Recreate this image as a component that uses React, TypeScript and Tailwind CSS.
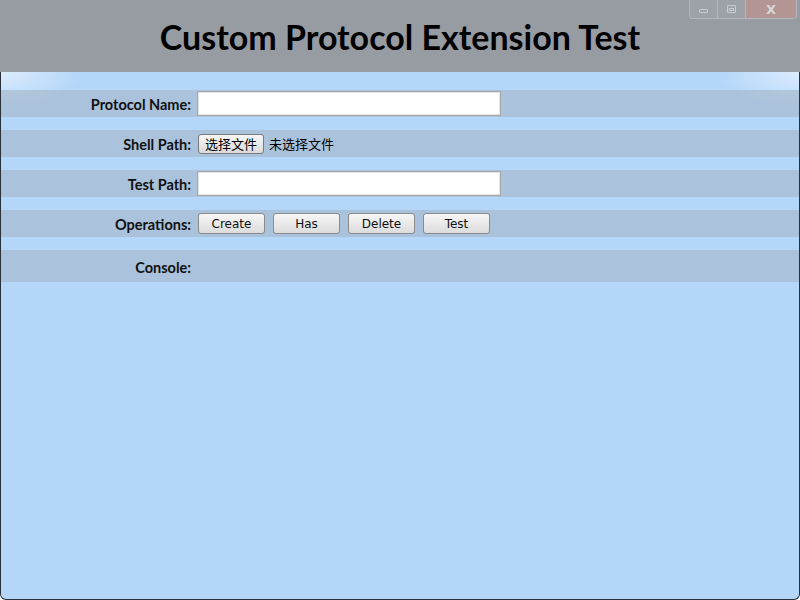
import React from "react";

const labelCls =
  "text-right text-[14.5px] font-bold text-[#111] leading-none [font-family:Lato,'Noto_Sans',sans-serif] pr-[6px] pt-[4px]";

function Btn({ children }: { children: React.ReactNode }) {
  return (
    <button className="w-[67px] h-[21px] rounded-[3px] border border-[#8a8a8a] bg-[linear-gradient(#f6f6f6,#dcdcdc)] text-[12px] text-[#111] leading-none [font-family:'DejaVu_Sans',sans-serif]">
      {children}
    </button>
  );
}

export default function App() {
  return (
    <div className="w-[800px] h-[600px] bg-white flex flex-col overflow-hidden">
      <div className="relative h-[72px] bg-[#979ca3] flex items-center justify-center shrink-0">
        <h1 className="text-[34px] font-bold text-black leading-none mt-[1px] [font-family:Lato,'Noto_Sans',sans-serif]">
          Custom Protocol Extension Test
        </h1>
        <div className="absolute top-0 right-[3px] flex h-[19px] rounded-b-[4px] border border-t-0 border-[#b4b8be] overflow-hidden">
          <div className="w-[28px] bg-[#9da2a9] border-r border-[#b4b8be] flex items-center justify-center">
            <div className="w-[9px] h-[4px] rounded-[1px] border border-[#c8cbd0] mt-[4px]" />
          </div>
          <div className="w-[28px] bg-[#9da2a9] border-r border-[#b4b8be] flex items-center justify-center">
            <div className="w-[9px] h-[8px] rounded-[1px] border border-[#c8cbd0] flex items-center justify-center">
              <div className="w-[5px] h-[3px] border border-[#c8cbd0]" />
            </div>
          </div>
          <div className="w-[50px] bg-[#b39593] flex items-center justify-center">
            <span className="text-[13px] font-bold text-[#d8d8d8] leading-none [font-family:'DejaVu_Sans',sans-serif]">X</span>
          </div>
        </div>
      </div>
      <div className="flex-1 border-x border-b border-[#2a3038] rounded-b-[6px] bg-[#b4d7f9] bg-[radial-gradient(ellipse_80px_36px_at_0_0,#dcecfe,transparent),radial-gradient(ellipse_80px_36px_at_100%_0,#dcecfe,transparent)] pt-[18px] flex flex-col gap-[13px]">
        <div className="h-[27px] bg-[rgba(163,180,198,0.6)] grid grid-cols-[196px_1fr] items-center">
          <div className={labelCls}>Protocol Name:</div>
          <input className="w-[304px] h-[25px] bg-white border border-[#a8a8a8] shadow-[inset_0_0_0_1px_#e2e2e2] outline-none" />
        </div>
        <div className="h-[27px] bg-[rgba(163,180,198,0.6)] grid grid-cols-[196px_1fr] items-center">
          <div className={labelCls}>Shell Path:</div>
          <div className="flex items-center gap-[5px] pl-[1px] [font-family:'Noto_Sans_CJK_SC',sans-serif] text-[13px] text-black">
            <button className="w-[66px] h-[20px] rounded-[3px] border border-[#7a7a7a] bg-[linear-gradient(#f7f7f7,#dadada)] text-[13px] leading-none">
              选择文件
            </button>
            <span className="leading-none">未选择文件</span>
          </div>
        </div>
        <div className="h-[27px] bg-[rgba(163,180,198,0.6)] grid grid-cols-[196px_1fr] items-center">
          <div className={labelCls}>Test Path:</div>
          <input className="w-[304px] h-[25px] bg-white border border-[#a8a8a8] shadow-[inset_0_0_0_1px_#e2e2e2] outline-none" />
        </div>
        <div className="h-[27px] bg-[rgba(163,180,198,0.6)] grid grid-cols-[196px_1fr] items-center">
          <div className={labelCls}>Operations:</div>
          <div className="flex gap-[8px] pl-[1px]">
            <Btn>Create</Btn>
            <Btn>Has</Btn>
            <Btn>Delete</Btn>
            <Btn>Test</Btn>
          </div>
        </div>
        <div className="h-[32px] bg-[rgba(163,180,198,0.6)] grid grid-cols-[196px_1fr] items-center">
          <div className={labelCls}>Console:</div>
          <div />
        </div>
      </div>
    </div>
  );
}
